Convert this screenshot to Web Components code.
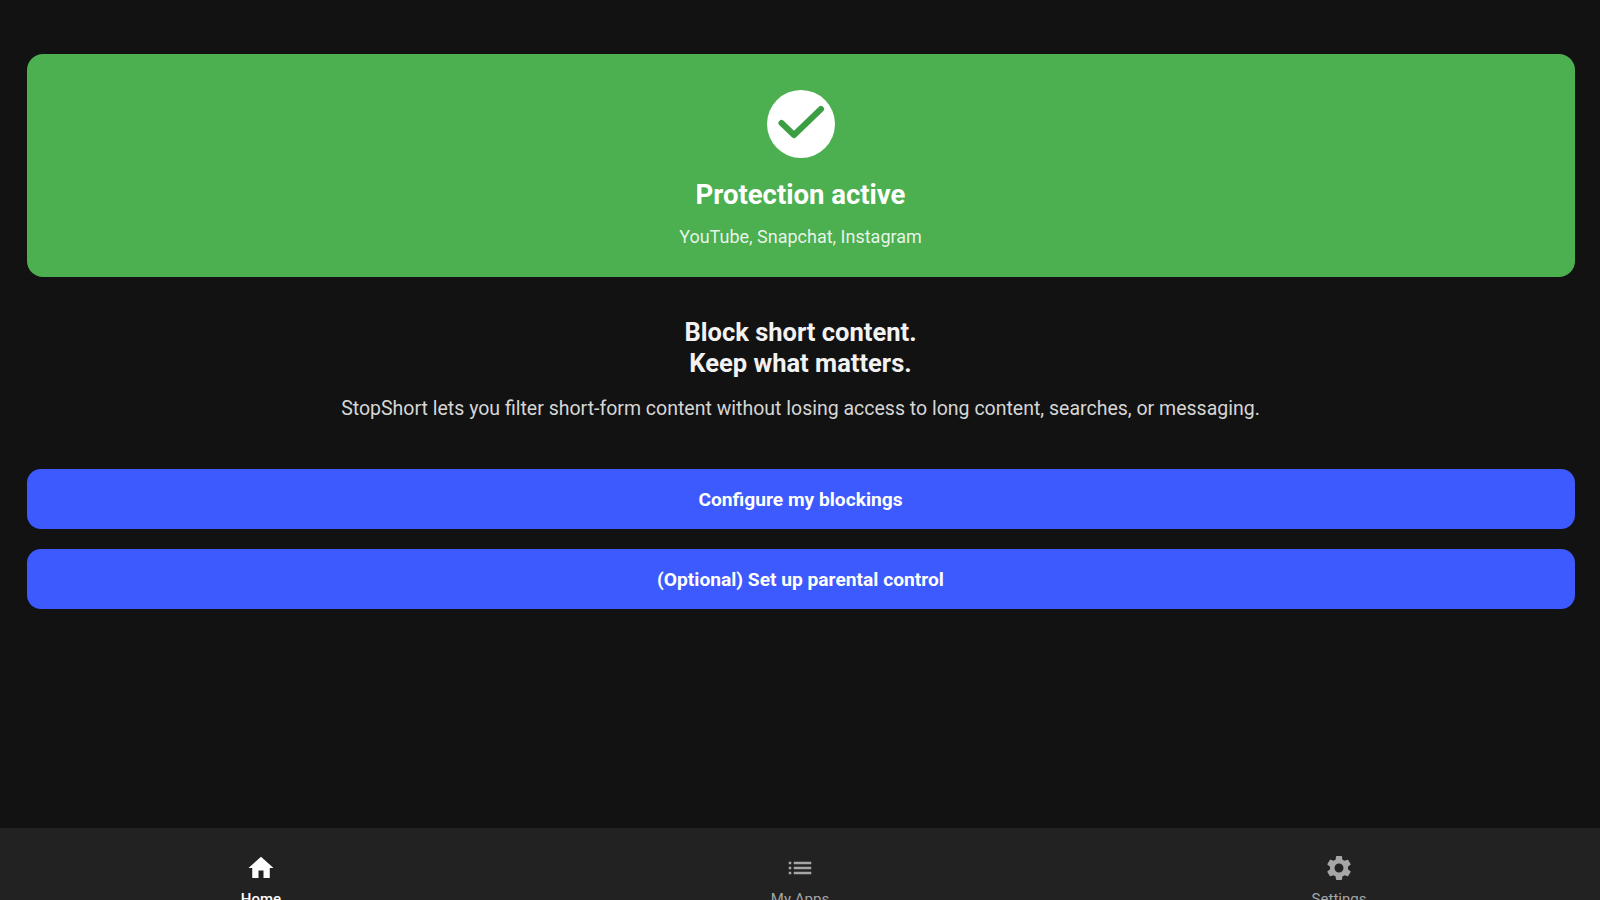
<!DOCTYPE html>
<html>
<head>
<meta charset="utf-8">
<title>StopShort</title>
<style>
  html, body { margin: 0; height: 900px; overflow: hidden; background: #121212; }
  body { font-family: Roboto, "Liberation Sans", sans-serif; }
</style>
</head>
<body>
<app-shell>
  <status-card title-text="Protection active" apps="YouTube, Snapchat, Instagram"></status-card>
  <intro-text lead="Block short content." sub="Keep what matters.">StopShort lets you filter short-form content without losing access to long content, searches, or messaging.</intro-text>
  <action-button>Configure my blockings</action-button>
  <action-button>(Optional) Set up parental control</action-button>
  <bottom-nav slot="nav">
    <nav-item label="Home" icon="home" active></nav-item>
    <nav-item label="My Apps" icon="list"></nav-item>
    <nav-item label="Settings" icon="gear"></nav-item>
  </bottom-nav>
</app-shell>

<script>
  class AppShell extends HTMLElement {
    constructor() {
      super();
      this.attachShadow({ mode: 'open' });
      this.shadowRoot.innerHTML = `
        <style>
          :host { display: flex; flex-direction: column; height: 900px; background: #121212; overflow: hidden; }
          main { flex: 1; min-height: 0; padding: 54px 25.5px 0 26.5px; display: flex; flex-direction: column; }
        </style>
        <main><slot></slot></main>
        <slot name="nav"></slot>
      `;
    }
  }

  class StatusCard extends HTMLElement {
    constructor() {
      super();
      this.attachShadow({ mode: 'open' });
    }

    connectedCallback() {
      this.shadowRoot.innerHTML = `
        <style>
          :host { display: flex; flex-direction: column; align-items: center; height: 223px; box-sizing: border-box; padding-top: 36px; background: #4caf50; border-radius: 16px; color: #fff; }
          svg { display: block; width: 68px; height: 68px; }
          h2 { margin: 21px 0 0; font-size: 27.5px; line-height: 32px; font-weight: 700; }
          p { margin: 14px 0 0; font-size: 18px; line-height: 24px; color: rgba(255,255,255,.88); }
        </style>
        <svg viewBox="0 0 68 68">
          <circle cx="34" cy="34" r="34" fill="#fff"/>
          <path d="M14.5 33 L27 45 L54 19" fill="none" stroke="#3c9e43" stroke-width="6" stroke-linecap="round" stroke-linejoin="round"/>
        </svg>
        <h2>${this.getAttribute('title-text')}</h2>
        <p>${this.getAttribute('apps')}</p>
      `;
    }
  }

  class IntroText extends HTMLElement {
    constructor() {
      super();
      this.attachShadow({ mode: 'open' });
    }

    connectedCallback() {
      this.shadowRoot.innerHTML = `
        <style>
          :host { display: block; text-align: center; padding-top: 40px; margin-bottom: 48px; color: #fff; }
          h1 { margin: 0; font-size: 25.5px; line-height: 30.5px; font-weight: 700; color: #f2f2f2; }
          p { margin: 19px 0 0; font-size: 19.5px; line-height: 24px; color: #d6d6d6; }
        </style>
        <h1>${this.getAttribute('lead')}<br>${this.getAttribute('sub')}</h1>
        <p><slot></slot></p>
      `;
    }
  }

  class ActionButton extends HTMLElement {
    constructor() {
      super();
      this.attachShadow({ mode: 'open' });
      this.shadowRoot.innerHTML = `
        <style>
          :host { display: flex; align-items: center; justify-content: center; height: 60px; margin-bottom: 20px; background: #3d5afe; border-radius: 14px; color: #fff; font-size: 19.2px; font-weight: 700; }
        </style>
        <slot></slot>
      `;
    }
  }

  class BottomNav extends HTMLElement {
    constructor() {
      super();
      this.attachShadow({ mode: 'open' });
      this.shadowRoot.innerHTML = `
        <style>
          :host { display: grid; grid-template-columns: repeat(3, 539px); justify-content: center; height: 72px; overflow: hidden; background: #222; }
        </style>
        <slot></slot>
      `;
    }
  }

  const NAV_ICONS = {
    home: '<path d="M10 20v-6h4v6h5v-8h3L12 3 2 12h3v8z"/>',
    list: '<path d="M3 13h2v-2H3v2zm0 4h2v-2H3v2zm0-8h2V7H3v2zm4 4h14v-2H7v2zm0 4h14v-2H7v2zM7 7v2h14V7H7z"/>',
    gear: '<path d="M19.14 12.94c.04-.3.06-.61.06-.94 0-.32-.02-.64-.07-.94l2.03-1.58c.18-.14.23-.41.12-.61l-1.92-3.32c-.12-.22-.37-.29-.59-.22l-2.39.96c-.5-.38-1.03-.7-1.62-.94l-.36-2.54c-.04-.24-.24-.41-.48-.41h-3.84c-.24 0-.43.17-.47.41l-.36 2.54c-.59.24-1.13.57-1.62.94l-2.39-.96c-.22-.08-.47 0-.59.22L2.74 8.87c-.12.21-.08.47.12.61l2.03 1.58c-.05.3-.09.63-.09.94s.02.64.07.94l-2.03 1.58c-.18.14-.23.41-.12.61l1.92 3.32c.12.22.37.29.59.22l2.39-.96c.5.38 1.03.7 1.62.94l.36 2.54c.05.24.24.41.48.41h3.84c.24 0 .44-.17.47-.41l.36-2.54c.59-.24 1.13-.56 1.62-.94l2.39.96c.22.08.47 0 .59-.22l1.92-3.32c.12-.22.07-.47-.12-.61l-2.01-1.58zM12 15.6c-1.98 0-3.6-1.62-3.6-3.6s1.62-3.6 3.6-3.6 3.6 1.62 3.6 3.6-1.62 3.6-3.6 3.6z"/>'
  };

  class NavItem extends HTMLElement {
    constructor() {
      super();
      this.attachShadow({ mode: 'open' });
    }

    connectedCallback() {
      const active = this.hasAttribute('active');
      this.shadowRoot.innerHTML = `
        <style>
          :host { display: flex; flex-direction: column; align-items: center; padding-top: 25px; color: ${active ? '#fff' : '#a6a6a6'}; font-size: 15px; line-height: 20px; font-weight: ${active ? 500 : 400}; }
          svg { display: block; width: 30px; height: 30px; fill: currentColor; margin-bottom: 6px; }
        </style>
        <svg viewBox="0 0 24 24">${NAV_ICONS[this.getAttribute('icon')]}</svg>
        <span>${this.getAttribute('label')}</span>
      `;
    }
  }

  customElements.define('app-shell', AppShell);
  customElements.define('status-card', StatusCard);
  customElements.define('intro-text', IntroText);
  customElements.define('action-button', ActionButton);
  customElements.define('bottom-nav', BottomNav);
  customElements.define('nav-item', NavItem);
</script>
</body>
</html>
